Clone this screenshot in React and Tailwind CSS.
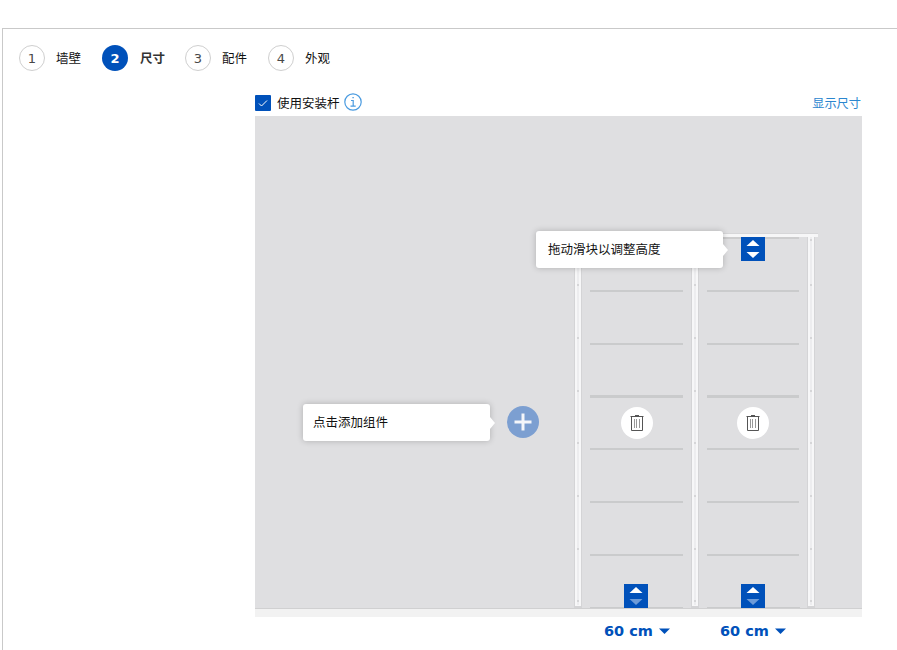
import React from "react";

const STEPS = [
  { n: 1, label: "墙壁" },
  { n: 2, label: "尺寸", active: true },
  { n: 3, label: "配件" },
  { n: 4, label: "外观" },
];

const POSTS = [575, 692, 808];
const BAYS = [590, 707];
const SHELVES = [
  [290, 2],
  [343, 2],
  [395, 3],
  [448, 2],
  [501, 2],
  [554, 2],
];
const HOLES = [239, 284, 337, 390, 442, 495, 548, 600];

function Step({ n, label, active }) {
  return (
    <li className="flex w-[83px] items-center">
      <span
        className={
          active
            ? "flex size-[26px] items-center justify-center rounded-full bg-[#0051ba] pt-px font-['DejaVu_Sans'] text-[13px] font-bold text-white"
            : "flex size-[26px] items-center justify-center rounded-full border border-[#cfcfcf] pt-px font-['DejaVu_Sans'] text-[13px] text-[#484848]"
        }
      >
        {n}
      </span>
      <span className={active ? "ml-3 font-bold text-[#333]" : "ml-[11px]"}>{label}</span>
    </li>
  );
}

function Shelving() {
  return (
    <svg className="block h-[501px] w-[607px]" viewBox="255 116 607 501" shapeRendering="crispEdges">
      <rect x="255" y="608" width="607" height="1" fill="#d0d0d1" />
      <rect x="255" y="609" width="607" height="8" fill="#f2f2f2" />
      <rect x="575" y="233" width="243" height="1" fill="#d6d6d8" />
      <rect x="575" y="234" width="243" height="3" fill="#f6f6f7" />
      <rect x="575" y="237" width="224" height="2" fill="#cdcdce" />
      {BAYS.map((x) => (
        <g key={x}>
          {SHELVES.map(([y, h]) => (
            <rect key={y} x={x} y={y} width={x === 590 ? 93 : 92} height={h} fill="#cacbcc" />
          ))}
          <rect x={x} y="607" width="93" height="1" fill="#cacbcc" />
        </g>
      ))}
      {POSTS.map((x) => (
        <g key={x}>
          <rect x={x - 1} y="237" width="8" height="371" fill="#d4d4d6" />
          <rect x={x} y="234" width="6" height="372" fill="#f7f7f8" />
          <rect x={x + 2} y="237" width="2" height="368" fill="#ededef" />
          {HOLES.map((y) => (
            <rect key={y} x={x + 2} y={y} width="2" height="2" fill="#d6d6d8" />
          ))}
        </g>
      ))}
    </svg>
  );
}

function Handle({ className, dim }) {
  return (
    <button className={`absolute size-6 bg-[#0051ba] ${className}`}>
      <svg viewBox="0 0 24 24" className="block size-6">
        <path d="M12 3l6.5 6h-13z" fill="#fff" />
        <path d="M12 21l6.5-6h-13z" fill={dim ? "#6d9bd8" : "#fff"} />
      </svg>
    </button>
  );
}

function Trash({ className }) {
  return (
    <button className={`absolute size-8 rounded-full bg-white ${className}`}>
      <svg viewBox="0 0 32 32" className="block size-8" fill="none" stroke="#555">
        <path d="M9.5 9.5h13M14 8.5h4M10.5 9.5v14h11v-14" />
        <path d="M13.5 12v9M15.5 12v9M18.5 12v9" stroke="#999" />
      </svg>
    </button>
  );
}

function Tip({ className, children }) {
  return (
    <div
      className={`absolute flex h-[37px] w-[187px] items-center rounded-[3px] bg-white shadow-[0_0_6px_rgba(0,0,0,0.22)] ${className}`}
    >
      {children}
      <span className="absolute top-[13px] left-full border-y-[6px] border-l-[5px] border-y-transparent border-l-white" />
    </div>
  );
}

function Width() {
  return (
    <button className="flex w-[66px] items-center justify-between font-['DejaVu_Sans'] text-[14.5px] font-bold text-[#0051ba]">
      <span className="whitespace-nowrap">60 cm</span>
      <svg viewBox="0 0 11 6" className="mb-px h-[6px] w-[11px]">
        <path d="M0 .5h11L5.5 6z" fill="#0051ba" />
      </svg>
    </button>
  );
}

export default function App() {
  return (
    <div className="h-[650px] w-[897px] overflow-hidden bg-white pt-7 pl-[2px] font-['Noto_Sans_CJK_SC',sans-serif] text-[12.5px] leading-[18px] text-[#111]">
      <div className="h-[622px] border-t border-l border-[#c9c9c9]">
        <ol className="flex pt-4 pl-4">
          {STEPS.map((s) => (
            <Step key={s.n} {...s} />
          ))}
        </ol>
        <div className="ml-[252px] w-[607px]">
          <div className="flex h-[45px] items-end justify-between pb-1">
            <label className="flex items-center">
              <span className="flex size-4 items-center justify-center rounded-[1px] bg-[#0051ba]">
                <svg viewBox="0 0 16 16" className="size-4" fill="none" stroke="#fff">
                  <path d="M4 8.5l2.5 2.5L12 5.5" />
                </svg>
              </span>
              <span className="ml-[6px]">使用安装杆</span>
              <svg viewBox="0 0 18 18" className="mb-px ml-1 size-[18px]" fill="none" stroke="#4a9be0" strokeWidth="1.2">
                <circle cx="9" cy="9" r="8.2" />
                <path d="M7 7.5h2.2v5.5M6.5 13.2h5.2M8.4 4.7h1.4" />
              </svg>
            </label>
            <a className="mr-px text-[12.2px] text-[#2a86cf]">显示尺寸</a>
          </div>
          <div className="relative h-[501px] bg-[#dfdfe1]">
            <Shelving />
            <Tip className="top-[115px] left-[281px] pb-px pl-3">拖动滑块以调整高度</Tip>
            <Tip className="top-[288px] left-[48px] pb-px pl-[10px]">点击添加组件</Tip>
            <button className="absolute top-[290px] left-[252px] size-8 rounded-full bg-[#7c9fd1]">
              <svg viewBox="0 0 32 32" className="block size-8" stroke="#f4f6fa" strokeWidth="3">
                <path d="M16 7.5v17M7.5 16h17" />
              </svg>
            </button>
            <Handle className="top-[121px] left-[486px]" />
            <Trash className="top-[291px] left-[366px]" />
            <Trash className="top-[291px] left-[482px]" />
            <Handle className="top-[468px] left-[369px]" dim />
            <Handle className="top-[468px] left-[486px]" dim />
          </div>
          <div className="flex gap-[50px] pt-[5px] pl-[349px]">
            <Width />
            <Width />
          </div>
        </div>
      </div>
    </div>
  );
}
